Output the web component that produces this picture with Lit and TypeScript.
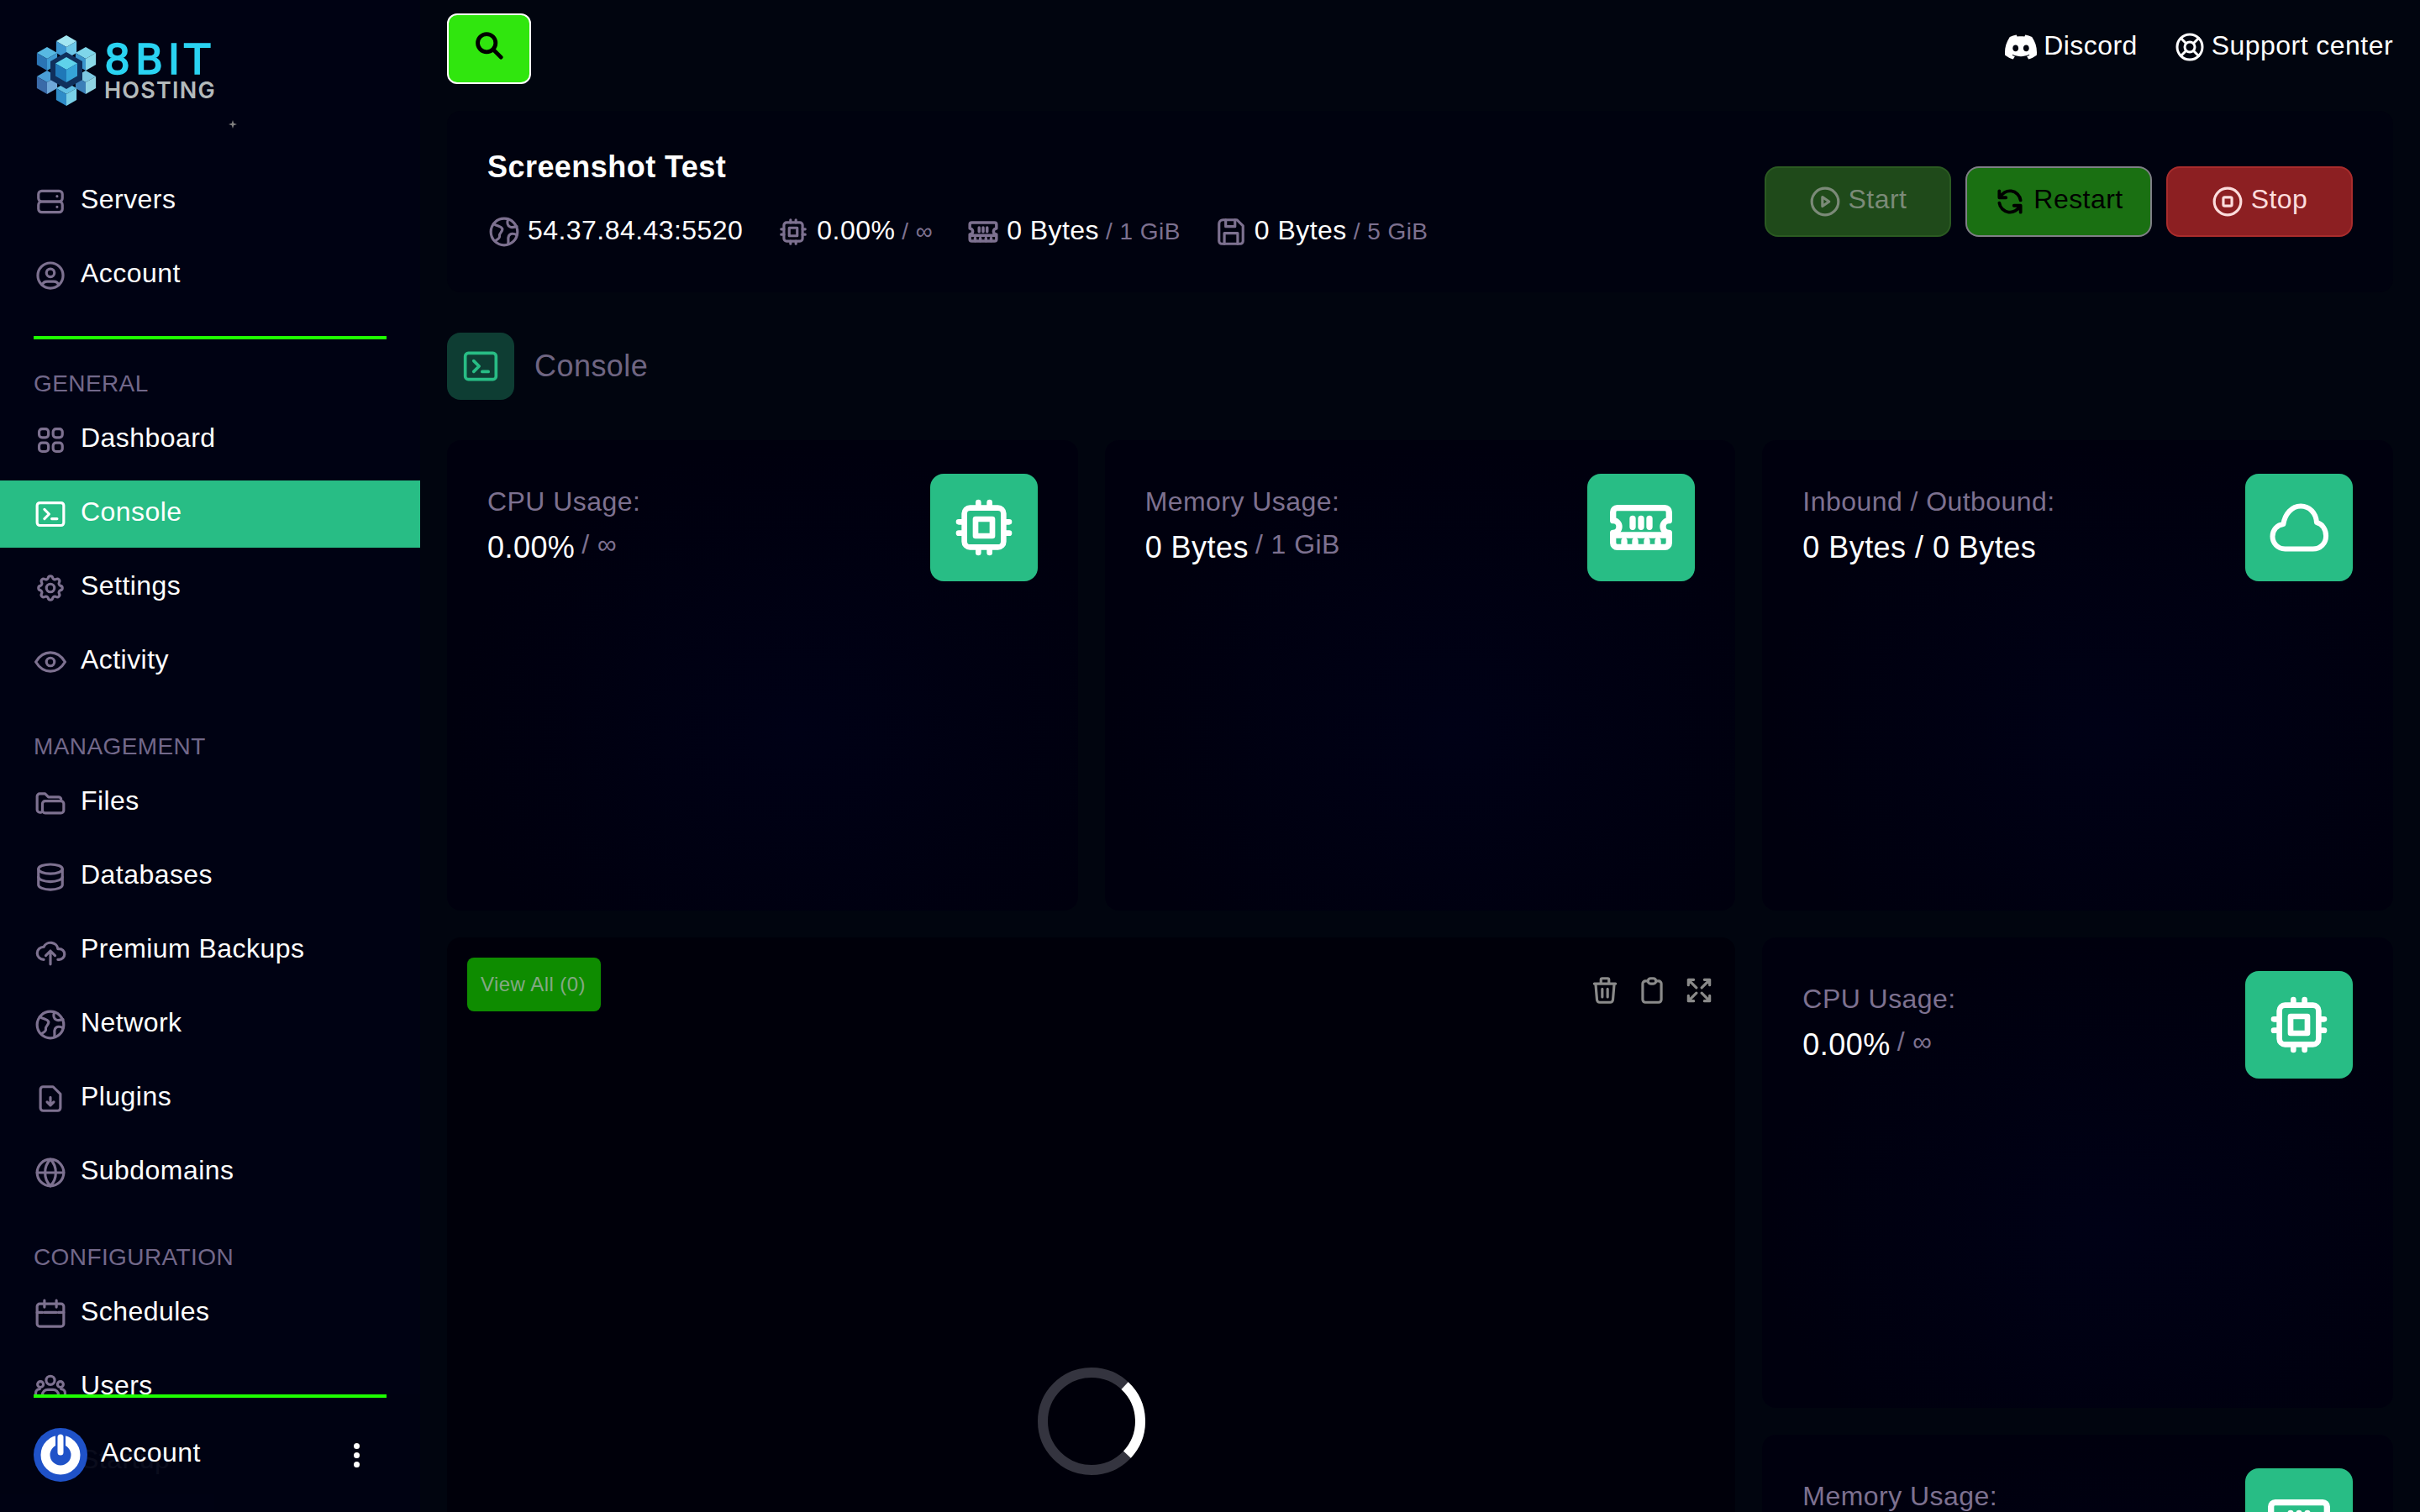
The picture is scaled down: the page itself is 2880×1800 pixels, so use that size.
import { LitElement, html, svg, css } from 'lit';
import { customElement } from 'lit/decorators.js';

// tabler-style outlines, drawn on a 24 unit box
const icons: Record<string, any> = {
  server: svg`<rect x="3" y="4" width="18" height="8" rx="2.5"/><rect x="3" y="12" width="18" height="8" rx="2.5"/><path d="M17 8v.01M17 16v.01"/>`,
  account: svg`<circle cx="12" cy="12" r="9.5"/><circle cx="12" cy="10" r="3"/><path d="M5.8 19.2a4 4 0 0 1 4-2.7h4.4a4 4 0 0 1 4 2.7"/>`,
  grid: svg`<rect x="3.5" y="3.5" width="7" height="6.5" rx="2.2"/><rect x="14" y="3.5" width="7" height="6.5" rx="2.2"/><rect x="3.5" y="14" width="7" height="6.5" rx="2.2"/><rect x="14" y="14" width="7" height="6.5" rx="2.2"/>`,
  terminal: svg`<rect x="2" y="3.5" width="20" height="17" rx="2"/><path d="M7.5 8.5l3.5 3.5l-3.5 3.5M13 15.5h4"/>`,
  settings: svg`<path d="M10.325 4.317c.426-1.756 2.924-1.756 3.35 0a1.724 1.724 0 0 0 2.573 1.066c1.543-.94 3.31.826 2.37 2.37a1.724 1.724 0 0 0 1.065 2.572c1.756.426 1.756 2.924 0 3.35a1.724 1.724 0 0 0-1.066 2.573c.94 1.543-.826 3.31-2.37 2.37a1.724 1.724 0 0 0-2.572 1.065c-.426 1.756-2.924 1.756-3.35 0a1.724 1.724 0 0 0-2.573-1.066c-1.543.94-3.31-.826-2.37-2.37a1.724 1.724 0 0 0-1.065-2.572c-1.756-.426-1.756-2.924 0-3.35a1.724 1.724 0 0 0 1.066-2.573c-.94-1.543.826-3.31 2.37-2.37c1 .608 2.296.07 2.572-1.065z"/><circle cx="12" cy="12" r="3"/>`,
  eye: svg`<path d="M1 12C4 7 7.5 5 12 5s8 2 11 7c-3 5-6.500 7-11 7s-8-2-11-7z"/><circle cx="12" cy="12" r="3"/>`,
  folders: svg`<path d="M5 19H4a2 2 0 0 1-2-2V7a2 2 0 0 1 2-2h4l2.500 2.500H18a2 2 0 0 1 2 1.500"/><rect x="6" y="10.500" width="16" height="9" rx="2"/>`,
  database: svg`<ellipse cx="12" cy="6" rx="9" ry="3.500"/><path d="M3 6v6c0 1.900 4 3.500 9 3.500s9-1.600 9-3.500V6"/><path d="M3 12v6c0 1.900 4 3.500 9 3.500s9-1.600 9-3.500v-6"/>`,
  upload: svg`<path d="M7 18.500a4.800 4.600 0 0 1 0-9.500a5.500 5 0 0 1 10.600 1.500h1a4 4 0 0 1 0 8h-1"/><path d="M8.500 15.500l3.500-3.500l3.500 3.500M12 12v10"/>`,
  network: svg`<circle cx="12" cy="12" r="10"/><path d="M4 6c3 2 5.500 1.500 6.500 3.500S8 13 8.500 15s-2 3-3 3.500"/><path d="M15 2.500c-1 2.500-.500 5 1.500 5.800s3.500-.300 5-.300"/><path d="M21.500 14.500c-2-1.500-5-1.500-6 .500s0 3.500-.500 6"/>`,
  plugin: svg`<path d="M6.500 3H14l5.500 5.500v10.500a2 2 0 0 1-2 2h-11a2 2 0 0 1-2-2V5a2 2 0 0 1 2-2z"/><path d="M12 11v6M9.500 14.500L12 17l2.500-2.500"/>`,
  globe: svg`<circle cx="12" cy="12" r="10"/><path d="M2 12h20"/><path d="M12 2a14 14 0 0 1 4 10a14 14 0 0 1-4 10a14 14 0 0 1-4-10a14 14 0 0 1 4-10z"/>`,
  calendar: svg`<rect x="2" y="4.500" width="20" height="17" rx="2"/><path d="M7.500 2v5M16.500 2v5M2 11h4M7.500 11h9M18 11h4"/>`,
  users: svg`<circle cx="12" cy="6.500" r="3.200"/><circle cx="4.500" cy="9.500" r="2.200"/><circle cx="19.500" cy="9.500" r="2.200"/><path d="M6 20v-2.500a4 4 0 0 1 4-4h4a4 4 0 0 1 4 4V20M1 17v-1a3 3 0 0 1 3-3M23 17v-1a3 3 0 0 0-3-3"/>`,
  startup: svg`<circle cx="12" cy="12" r="10"/><path d="M12 7v5l3 3"/>`,
  cpu: svg`<rect x="5" y="5" width="14" height="14" rx="2"/><path d="M9 9h6v6H9zM3 10h2M3 14h2M10 3v2M14 3v2M21 10h-2M21 14h-2M14 21v-2M10 21v-2"/>`,
  ram: svg`<path d="M3.500 5h17a1.500 1.500 0 0 1 1.500 1.500v3a2.200 2.200 0 0 0 0 4.400V17.500a1.500 1.500 0 0 1-1.500 1.500h-17A1.500 1.500 0 0 1 2 17.500v-3.600a2.200 2.200 0 0 0 0-4.400v-3A1.500 1.500 0 0 1 3.500 5z"/><path d="M9 8.800v3M12 8.800v3M15 8.800v3M3 14.700h18M6 16.800v2M9.900 16.800v2M14.100 16.800v2M18 16.800v2"/>`,
  floppy: svg`<path d="M6 3h10.500L21 7.500V19a2 2 0 0 1-2 2H5a2 2 0 0 1-2-2V6a3 3 0 0 1 3-3z"/><path d="M8 3v5h7V3M7 21v-8h10v8"/>`,
  cloud: svg`<path d="M6.500 20.500C3.500 20.500 1.500 18.200 1.500 15.500C1.500 13 3.300 11 5.800 10.700C6.400 6.500 9.200 3.500 12.700 3.500C16.200 3.500 18.800 6.300 19 10C21.200 10.500 22.700 12.700 22.700 15.300C22.700 18.300 20.500 20.500 17.500 20.500z"/>`,
  play: svg`<circle cx="12" cy="12" r="10"/><path d="M10 8.500l5 3.500l-5 3.500z"/>`,
  stop: svg`<circle cx="12" cy="12" r="10"/><rect x="8.800" y="8.800" width="6.400" height="6.400" rx="1"/>`,
  refresh: svg`<path d="M20 11a8.100 8.100 0 0 0-15.500-2m-.5-5v5h5"/><path d="M4 13a8.100 8.100 0 0 0 15.500 2m.5 5v-5h-5"/>`,
  lifebuoy: svg`<circle cx="12" cy="12" r="4"/><circle cx="12" cy="12" r="10"/><path d="M15 15l4 4M9 15l-4 4M5 5l4 4M19 5l-4 4"/>`,
  trash: svg`<path d="M4 7h16M10 11v6M14 11v6M5 7l1 12a2 2 0 0 0 2 2h8a2 2 0 0 0 2-2l1-12M9 7V4a1 1 0 0 1 1-1h4a1 1 0 0 1 1 1v3"/>`,
  clipboard: svg`<path d="M9 5H7a2 2 0 0 0-2 2v12a2 2 0 0 0 2 2h10a2 2 0 0 0 2-2V7a2 2 0 0 0-2-2h-2"/><rect x="9" y="3" width="6" height="4" rx="2"/>`,
  expand: svg`<path d="M16 4h4v4M14 10l6-6M8 20H4v-4M4 20l6-6M16 20h4v-4M14 14l6 6M8 4H4v4M4 4l6 6"/>`,
};

const icon = (name: string, size = 38, width = 2) => html`<svg class="ico" width=${size} height=${size} viewBox="0 0 24 24" fill="none" stroke="currentColor" stroke-width=${width} stroke-linecap="round" stroke-linejoin="round">${icons[name]}</svg>`;

const DISCORD = 'M20.317 4.3698a19.7913 19.7913 0 00-4.8851-1.5152.0741.0741 0 00-.0785.0371c-.211.3753-.4447.8648-.6083 1.2495-1.8447-.2762-3.68-.2762-5.4868 0-.1636-.3933-.4058-.8742-.6177-1.2495a.077.077 0 00-.0785-.037 19.7363 19.7363 0 00-4.8852 1.515.0699.0699 0 00-.0321.0277C.5334 9.0458-.319 13.5799.0992 18.0578a.0824.0824 0 00.0312.0561c2.0528 1.5076 4.0413 2.4228 5.9929 3.0294a.0777.0777 0 00.0842-.0276c.4616-.6304.8731-1.2952 1.226-1.9942a.076.076 0 00-.0416-.1057c-.6528-.2476-1.2743-.5495-1.8722-.8923a.077.077 0 01-.0076-.1277c.1258-.0943.2517-.1923.3718-.2914a.0743.0743 0 01.0776-.0105c3.9278 1.7933 8.18 1.7933 12.0614 0a.0739.0739 0 01.0785.0095c.1202.099.246.1981.3728.2924a.077.077 0 01-.0066.1276 12.2986 12.2986 0 01-1.873.8914.0766.0766 0 00-.0407.1067c.3604.698.7719 1.3628 1.225 1.9932a.076.076 0 00.0842.0286c1.961-.6067 3.9495-1.5219 6.0023-3.0294a.077.077 0 00.0313-.0552c.5004-5.177-.8382-9.6739-3.5485-13.6604a.061.061 0 00-.0312-.0286zM8.02 15.3312c-1.1825 0-2.1569-1.0857-2.1569-2.419 0-1.3332.9555-2.4189 2.157-2.4189 1.2108 0 2.1757 1.0952 2.1568 2.419 0 1.3332-.9555 2.4189-2.1569 2.4189zm7.9748 0c-1.1825 0-2.1569-1.0857-2.1569-2.419 0-1.3332.9554-2.4189 2.1569-2.4189 1.2108 0 2.1757 1.0952 2.1568 2.419 0 1.3332-.946 2.4189-2.1568 2.4189Z';

const navGroups = [
  { label: '', items: [['server', 'Servers'], ['account', 'Account']] },
  { label: 'General', items: [['grid', 'Dashboard'], ['terminal', 'Console'], ['settings', 'Settings'], ['eye', 'Activity']] },
  { label: 'Management', items: [['folders', 'Files'], ['database', 'Databases'], ['upload', 'Premium Backups'], ['network', 'Network'], ['plugin', 'Plugins'], ['globe', 'Subdomains']] },
  { label: 'Configuration', items: [['calendar', 'Schedules'], ['users', 'Users'], ['startup', 'Startup']] },
];

// centres of the six outer cubes in the logo
const cubes = [
  [36, 14, '#a2e6f2', '#3c97d2', '#6cc6e6'],
  [13, 28, '#58b9e2', '#2a74b4', '#3e9ad2'],
  [59, 28, '#7fd6ea', '#3a95cc', '#8ad8e8'],
  [13, 56, '#4a9ed6', '#3a6aa8', '#6fa8d8'],
  [59, 56, '#7cc8e2', '#3c7fb8', '#8fd4e4'],
  [36, 70, '#62c0e4', '#2f8cc8', '#79cfe6'],
] as const;

const cube = ([cx, cy, top, left, right]: readonly [number, number, string, string, string], r = 14) => {
  const w = r * 0.866;
  return svg`
    <polygon fill=${top} points="${cx},${cy - r} ${cx + w},${cy - r / 2} ${cx},${cy} ${cx - w},${cy - r / 2}"/>
    <polygon fill=${left} points="${cx - w},${cy - r / 2} ${cx},${cy} ${cx},${cy + r} ${cx - w},${cy + r / 2}"/>
    <polygon fill=${right} points="${cx + w},${cy - r / 2} ${cx},${cy} ${cx},${cy + r} ${cx + w},${cy + r / 2}"/>`;
};

@customElement('app-root')
export class AppRoot extends LitElement {
  static styles = css`
    :host {
      display: flex;
      height: 1800px;
      overflow: hidden;
      background: #01050f;
      color: #fff;
      font-family: 'Liberation Sans', Arial, sans-serif;
      font-size: 32px;
      letter-spacing: 0.45px;
    }
    .ico { display: block; flex: none; }

    /* sidebar */
    .sidebar {
      position: relative;
      display: flex;
      flex-direction: column;
      flex: none;
      width: 500px;
      height: 1800px;
      overflow: hidden;
      background: #000213;
    }
    .sidebar > * { flex: none; }
    .logo {
      position: relative;
      display: flex;
      gap: 9px;
      height: 200px;
      box-sizing: border-box;
      padding: 42px 0 0 43px;
    }
    .logo-text { padding-top: 12px; letter-spacing: 0; font-family: Inter, sans-serif; }
    .logo-8bit {
      font-family: 'DejaVu Sans', sans-serif;
      font-size: 49px;
      line-height: 36px;
      font-weight: 400;
      color: #2ad3f2;
      letter-spacing: 5.5px;
      -webkit-text-stroke: 1.6px #2ad3f2;
    }
    .logo-hosting { margin-top: 8px; font-size: 27px; line-height: 20px; font-weight: 600; color: #b4babb; letter-spacing: 1.2px; }
    .sparkle { position: absolute; left: 272px; top: 143px; }
    .divider { height: 4px; margin: 24px 40px 0; background: #1eff00; }
    .section { height: 40px; margin: 33px 0 7px 40px; line-height: 40px; font-size: 28px; letter-spacing: 0.4px; text-transform: uppercase; color: #72688a; }
    .item {
      display: flex;
      align-items: center;
      gap: 17px;
      height: 80px;
      margin-bottom: 8px;
      padding-left: 41px;
      color: #7d7190;
    }
    .item span { color: #fff; padding-bottom: 6px; }
    .item.active { background: #28bd85; color: #fff; }
    .account-bar {
      position: absolute;
      left: 0;
      right: 0;
      bottom: 0;
      height: 140px;
      background: rgba(0, 2, 19, 0.96);
    }
    .account-line { height: 4px; margin: 0 40px; background: #1eff00; }
    .account-row { display: flex; align-items: center; gap: 16px; padding: 36px 40px 0; }
    .avatar { width: 64px; height: 64px; flex: none; }
    .account-row span { flex: 1; padding-bottom: 6px; }
    .kebab { display: flex; flex-direction: column; gap: 4px; margin-right: 32px; }
    .kebab i { width: 7px; height: 7px; border-radius: 50%; background: #fff; }

    /* main column */
    .main { flex: 1; min-width: 0; padding: 0 32px; }
    .topbar { display: flex; align-items: flex-start; justify-content: space-between; height: 132px; box-sizing: border-box; padding-top: 16px; }
    .search {
      display: flex;
      align-items: center;
      justify-content: center;
      width: 100px;
      height: 84px;
      box-sizing: border-box;
      padding-bottom: 8px;
      border: 2px solid #fff;
      border-radius: 12px;
      background: #30e60e;
      color: #000;
    }
    .links { display: flex; gap: 44px; padding-top: 20px; }
    .link { display: flex; align-items: center; gap: 8px; }
    .link span { padding-bottom: 3px; }

    .server {
      display: flex;
      align-items: center;
      justify-content: space-between;
      height: 216px;
      box-sizing: border-box;
      padding: 0 48px;
      border-radius: 16px;
      background: #00020f;
    }
    .server-info { padding-bottom: 9px; }
    .server-name { font-size: 36px; line-height: 48px; font-weight: 700; margin-bottom: 33px; }
    .stats { display: flex; gap: 40px; }
    .stat { display: flex; align-items: center; gap: 8px; color: #7d7190; }
    .stat .ico { margin: 0 1px; }
    .stat b { font-weight: 400; color: #fff; padding-bottom: 4px; }
    .stat small { font-size: 28px; }
    .power { display: flex; gap: 17px; }
    .btn {
      display: flex;
      align-items: center;
      justify-content: center;
      gap: 9px;
      width: 222px;
      height: 84px;
      box-sizing: border-box;
      border: 2px solid;
      border-radius: 16px;
    }
    .btn span { padding-bottom: 6px; }
    .start { background: #1f4a1a; border-color: #2b5a22; color: #7b8a78; }
    .restart { background: #1a7012; border-color: #7f7f87; color: #000; }
    .stop { background: #8c1f22; border-color: #a92c2c; color: #fcdcdc; }

    .page-title { display: flex; align-items: center; gap: 24px; margin: 48px 0; }
    .page-icon {
      display: flex;
      align-items: center;
      justify-content: center;
      width: 80px;
      height: 80px;
      border-radius: 16px;
      background: #0e3d33;
      color: #28bd85;
    }
    .page-title span { font-size: 36px; color: #6f6582; }

    .grid { display: grid; grid-template-columns: repeat(3, 1fr); grid-auto-rows: 560px; gap: 32px; }
    .card {
      display: flex;
      align-items: flex-start;
      justify-content: space-between;
      box-sizing: border-box;
      padding: 40px 48px;
      border-radius: 16px;
      background: radial-gradient(ellipse at 55% 62%, #000116 0%, #00000e 70%);
    }
    .card-text { padding-top: 10px; }
    .card-label { line-height: 46px; color: #7d7190; }
    .card-value { margin-top: 4px; font-size: 36px; line-height: 56px; }
    .card-value small { margin-left: 8px; font-size: 32px; line-height: 1; color: #7d7190; vertical-align: 5px; }
    .tile {
      display: flex;
      align-items: center;
      justify-content: center;
      width: 128px;
      height: 128px;
      border-radius: 16px;
      background: #28bd85;
      color: #fff;
    }
    .console {
      position: relative;
      grid-column: span 2;
      grid-row: span 2;
      display: flex;
      align-items: flex-start;
      justify-content: space-between;
      padding: 24px;
      border-radius: 16px;
      background: #00000a;
    }
    .view-all {
      padding: 0 18px 0 16px;
      line-height: 64px;
      font-size: 24px;
      letter-spacing: 0.45px;
      border-radius: 8px;
      background: #0e8c00;
      color: #84a884;
    }
    .tools { display: flex; gap: 20px; margin: 20px 1px 0 0; color: #8a8a8a; }
    .tools .ico { margin: 0 -1px; }
    .spinner { position: absolute; left: 50%; top: 50%; transform: translate(-50%, -50%); }
  `;

  private statCard(label: string, value: string, sub: string, ic: string, size = 80) {
    return html`
      <div class="card">
        <div class="card-text">
          <div class="card-label">${label}</div>
          <div class="card-value">${value}${sub ? html`<small>${sub}</small>` : ''}</div>
        </div>
        <div class="tile">${icon(ic, size, ic === 'ram' ? 2.2 : 2)}</div>
      </div>`;
  }

  render() {
    return html`
      <aside class="sidebar">
        <div class="logo">
          <svg width="72" height="84" viewBox="0 0 72 84">
            ${cubes.map((c) => cube(c))}
            <polygon fill="#10305c" points="36,20 55,31 55,53 36,64 17,53 17,31"/>
            ${cube([36, 41, '#5fd2ea', '#1f78b8', '#36a4d8'], 15)}
          </svg>
          <div class="logo-text">
            <div class="logo-8bit">8BIT</div>
            <div class="logo-hosting">HOSTING</div>
          </div>
          <svg class="sparkle" width="10" height="10" viewBox="0 0 10 10"><path fill="#808080" d="M5 0l1.200 3.800L10 5L6.200 6.200L5 10L3.800 6.200L0 5l3.800-1.200z"/></svg>
        </div>
        ${navGroups.map((group, i) => html`
          ${i === 1 ? html`<div class="divider"></div>` : ''}
          ${group.label ? html`<div class="section">${group.label}</div>` : ''}
          ${group.items.map(([ic, label]) => html`
            <div class="item ${label === 'Console' ? 'active' : ''}">${icon(ic)}<span>${label}</span></div>`)}
        `)}
        <div class="account-bar">
          <div class="account-line"></div>
          <div class="account-row">
            <svg class="avatar" viewBox="0 0 64 64">
              <circle cx="32" cy="32" r="32" fill="#1f52c8"/>
              <circle cx="32" cy="32" r="18" fill="none" stroke="#fff" stroke-width="11"/>
              <path d="M32 6v24" stroke="#1f52c8" stroke-width="12"/>
              <path d="M32 11v18" stroke="#fff" stroke-width="7" stroke-linecap="round"/>
            </svg>
            <span>Account</span>
            <div class="kebab"><i></i><i></i><i></i></div>
          </div>
        </div>
      </aside>

      <main class="main">
        <div class="topbar">
          <div class="search">
            <svg width="34" height="34" viewBox="0 0 24 24" fill="none" stroke="#000" stroke-width="3.400" stroke-linecap="round"><circle cx="10" cy="10" r="7.500"/><path d="M16 16l6 6"/></svg>
          </div>
          <div class="links">
            <div class="link"><svg class="ico" width="38" height="38" viewBox="0 0 24 24" fill="#fff"><path d=${DISCORD}/></svg><span>Discord</span></div>
            <div class="link">${icon('lifebuoy', 36, 2)}<span>Support center</span></div>
          </div>
        </div>

        <section class="server">
          <div class="server-info">
            <div class="server-name">Screenshot Test</div>
            <div class="stats">
              <div class="stat">${icon('network')}<b>54.37.84.43:5520</b></div>
              <div class="stat">${icon('cpu')}<b>0.00%</b><small>/ ∞</small></div>
              <div class="stat">${icon('ram', 38, 2.2)}<b>0 Bytes</b><small>/ 1 GiB</small></div>
              <div class="stat">${icon('floppy')}<b>0 Bytes</b><small>/ 5 GiB</small></div>
            </div>
          </div>
          <div class="power">
            <div class="btn start">${icon('play')}<span>Start</span></div>
            <div class="btn restart">${icon('refresh', 38, 2.4)}<span>Restart</span></div>
            <div class="btn stop">${icon('stop')}<span>Stop</span></div>
          </div>
        </section>

        <div class="page-title">
          <div class="page-icon">${icon('terminal', 44)}</div>
          <span>Console</span>
        </div>

        <div class="grid">
          ${this.statCard('CPU Usage:', '0.00%', '/ ∞', 'cpu')}
          ${this.statCard('Memory Usage:', '0 Bytes', '/ 1 GiB', 'ram')}
          ${this.statCard('Inbound / Outbound:', '0 Bytes / 0 Bytes', '', 'cloud', 72)}
          <div class="console">
            <div class="view-all">View All (0)</div>
            <div class="tools">${icon('trash')}${icon('clipboard')}${icon('expand')}</div>
            <svg class="spinner" width="128" height="128" viewBox="0 0 128 128" fill="none" stroke-width="12">
              <circle cx="64" cy="64" r="58" stroke="#34343f"/>
              <circle cx="64" cy="64" r="58" stroke="#fff" stroke-dasharray="91 274" transform="rotate(-47 64 64)"/>
            </svg>
          </div>
          ${this.statCard('CPU Usage:', '0.00%', '/ ∞', 'cpu')}
          ${this.statCard('Memory Usage:', '0 Bytes', '/ 1 GiB', 'ram')}
        </div>
      </main>
    `;
  }
}
